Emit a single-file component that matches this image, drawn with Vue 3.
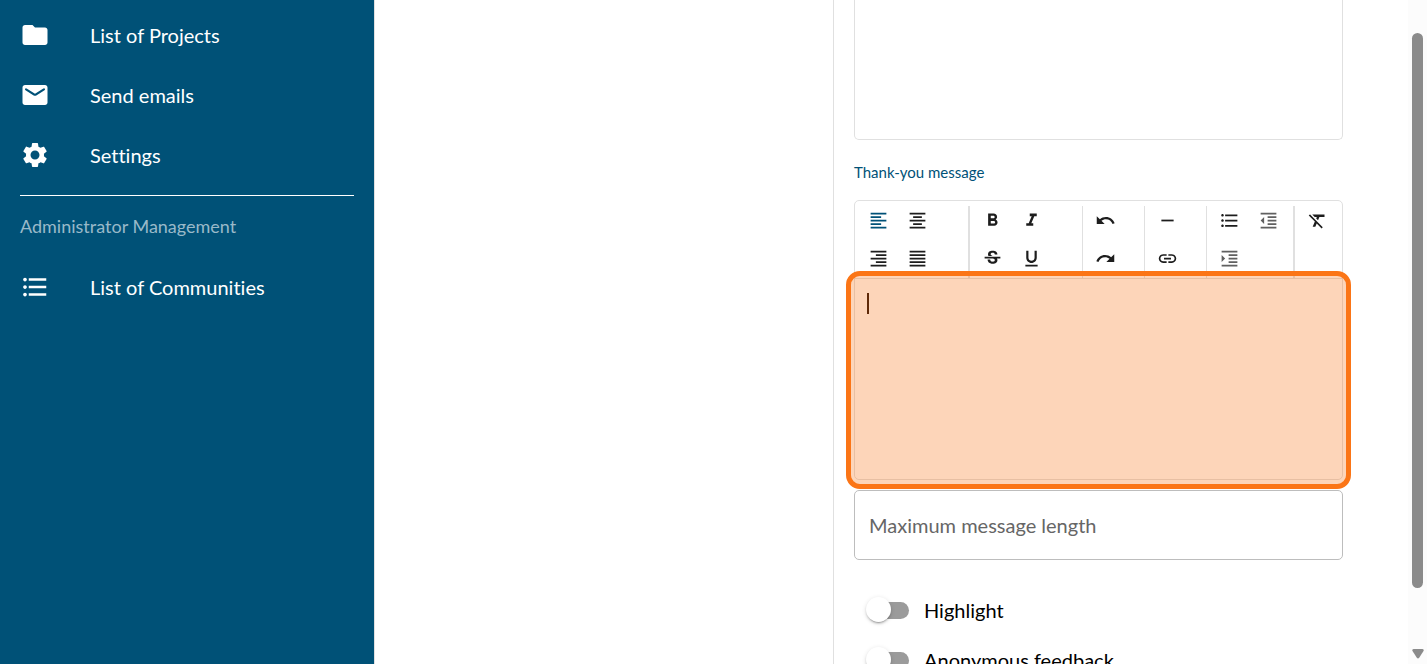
<script setup>
import { ref } from 'vue'

const mainLinks = [
  { label: 'List of Projects', path: 'M10 4H4c-1.1 0-2 .9-2 2v12c0 1.1.9 2 2 2h16c1.1 0 2-.9 2-2V8c0-1.1-.9-2-2-2h-8z' },
  { label: 'Send emails', path: 'M20 4H4c-1.1 0-2 .9-2 2v12c0 1.1.9 2 2 2h16c1.1 0 2-.9 2-2V6c0-1.1-.9-2-2-2zm-.4 4.25-6.54 4.09c-.65.41-1.47.41-2.12 0L4.4 8.25a.85.85 0 1 1 .9-1.44L12 11l6.7-4.19a.85.85 0 1 1 .9 1.44z' },
  { label: 'Settings', path: 'M19.14 12.94c.04-.3.06-.61.06-.94 0-.32-.02-.64-.07-.94l2.03-1.58c.18-.14.23-.41.12-.61l-1.92-3.32c-.12-.22-.37-.29-.59-.22l-2.39.96c-.5-.38-1.03-.7-1.62-.94l-.36-2.54c-.04-.24-.24-.41-.48-.41h-3.84c-.24 0-.43.17-.47.41l-.36 2.54c-.59.24-1.13.57-1.62.94l-2.39-.96c-.22-.08-.47 0-.59.22L2.74 8.87c-.12.21-.08.47.12.61l2.03 1.58c-.05.3-.09.63-.09.94s.02.64.07.94l-2.03 1.58c-.18.14-.23.41-.12.61l1.92 3.32c.12.22.37.29.59.22l2.39-.96c.5.38 1.03.7 1.62.94l.36 2.54c.05.24.24.41.48.41h3.84c.24 0 .44-.17.47-.41l.36-2.54c.59-.24 1.13-.56 1.62-.94l2.39.96c.22.08.47 0 .59-.22l1.92-3.32c.12-.22.07-.47-.12-.61l-2.01-1.58zM12 15.6c-1.98 0-3.6-1.62-3.6-3.6s1.62-3.6 3.6-3.6 3.6 1.62 3.6 3.6-1.62 3.6-3.6 3.6z' },
]

const listPath = 'M4 10.5c-.83 0-1.5.67-1.5 1.5s.67 1.5 1.5 1.5 1.5-.67 1.5-1.5-.67-1.5-1.5-1.5zm0-6c-.83 0-1.5.67-1.5 1.5S3.17 7.5 4 7.5 5.5 6.83 5.5 6 4.83 4.5 4 4.5zm0 12c-.83 0-1.5.68-1.5 1.5s.68 1.5 1.5 1.5 1.5-.68 1.5-1.5-.67-1.5-1.5-1.5zM7 19h14v-2H7v2zm0-6h14v-2H7v2zm0-8v2h14V5H7z'

const groups = [
  [
    { name: 'Align left', active: true, path: 'M15 15H3v2h12v-2zm0-8H3v2h12V7zM3 13h18v-2H3v2zm0 8h18v-2H3v2zM3 3v2h18V3H3z' },
    { name: 'Align center', path: 'M7 15v2h10v-2H7zm-4 6h18v-2H3v2zm0-8h18v-2H3v2zm4-6v2h10V7H7zM3 3v2h18V3H3z' },
    { name: 'Align right', path: 'M3 21h18v-2H3v2zm6-4h12v-2H9v2zm-6-4h18v-2H3v2zm6-4h12V7H9v2zM3 3v2h18V3H3z' },
    { name: 'Justify', path: 'M3 21h18v-2H3v2zm0-4h18v-2H3v2zm0-4h18v-2H3v2zm0-4h18V7H3v2zm0-6v2h18V3H3z' },
  ],
  [
    { name: 'Bold', path: 'M15.6 10.79c.97-.67 1.65-1.77 1.65-2.79 0-2.26-1.75-4-4-4H7v14h7.04c2.09 0 3.71-1.7 3.71-3.79 0-1.52-.86-2.82-2.15-3.42zM10 6.5h3c.83 0 1.5.67 1.5 1.5s-.67 1.5-1.5 1.5h-3v-3zm3.5 9H10v-3h3.5c.83 0 1.5.67 1.5 1.5s-.67 1.5-1.5 1.5z' },
    { name: 'Italic', path: 'M10 4v3h2.21l-3.42 8H6v3h8v-3h-2.21l3.42-8H18V4z' },
    { name: 'Strikethrough', path: 'M7.24 8.75c-.26-.48-.39-1.03-.39-1.67 0-.61.13-1.16.4-1.67.26-.5.63-.93 1.11-1.29.48-.35 1.05-.63 1.7-.83.66-.19 1.39-.29 2.18-.29.81 0 1.54.11 2.21.34.66.22 1.23.54 1.69.94.47.4.83.88 1.08 1.43s.38 1.15.38 1.81h-3.01c0-.31-.05-.59-.15-.85-.09-.27-.24-.49-.44-.68-.2-.19-.45-.33-.75-.44-.3-.1-.66-.16-1.06-.16-.39 0-.74.04-1.03.13s-.53.21-.72.36c-.19.16-.34.34-.44.55-.1.21-.15.43-.15.66 0 .48.25.88.74 1.21.38.25.77.48 1.41.7H7.39c-.05-.08-.11-.17-.15-.25zM21 12v-2H3v2h9.62c.18.07.4.14.55.2.37.17.66.34.87.51s.35.36.43.57c.07.2.11.43.11.69 0 .23-.05.45-.14.66-.09.2-.23.38-.42.53-.19.15-.42.26-.71.35-.29.08-.63.13-1.01.13-.43 0-.83-.04-1.18-.13s-.66-.23-.91-.42c-.25-.19-.45-.44-.59-.75s-.25-.76-.25-1.21H6.4c0 .55.08 1.13.24 1.58s.37.85.65 1.21c.28.35.6.66.98.92.37.26.78.48 1.22.65.44.17.9.3 1.38.39.48.08.96.13 1.44.13.8 0 1.53-.09 2.18-.28s1.21-.45 1.67-.79c.46-.34.82-.77 1.07-1.27s.38-1.07.38-1.71c0-.6-.1-1.14-.31-1.61-.05-.11-.11-.23-.17-.33H21z' },
    { name: 'Underline', path: 'M12 17c3.31 0 6-2.69 6-6V3h-2.5v8c0 1.93-1.57 3.5-3.5 3.5S8.5 12.93 8.5 11V3H6v8c0 3.31 2.69 6 6 6zm-7 2v2h14v-2H5z' },
  ],
  [
    { name: 'Undo', path: 'M12.5 8c-2.65 0-5.05.99-6.9 2.6L2 7v9h9l-3.62-3.62c1.39-1.16 3.16-1.88 5.12-1.88 3.54 0 6.55 2.31 7.6 5.5l2.37-.78C21.08 11.03 17.15 8 12.5 8z' },
    { name: 'Redo', path: 'M18.4 10.6C16.55 8.99 14.15 8 11.5 8c-4.65 0-8.58 3.03-9.96 7.22L3.9 16c1.05-3.19 4.05-5.5 7.6-5.5 1.95 0 3.73.72 5.12 1.88L13 16h9V7l-3.6 3.6z' },
  ],
  [
    { name: 'Horizontal rule', path: 'M5 11h14v2H5z' },
    { name: 'Link', path: 'M3.9 12c0-1.71 1.39-3.1 3.1-3.1h4V7H7c-2.76 0-5 2.24-5 5s2.24 5 5 5h4v-1.9H7c-1.71 0-3.1-1.39-3.1-3.1zM8 13h8v-2H8v2zm9-6h-4v1.9h4c1.71 0 3.1 1.39 3.1 3.1s-1.39 3.1-3.1 3.1h-4V17h4c2.76 0 5-2.24 5-5s-2.24-5-5-5z' },
  ],
  [
    { name: 'Bulleted list', path: listPath },
    { name: 'Decrease indent', disabled: true, path: 'M11 17h10v-2H11v2zm-8-5 4 4V8l-4 4zm0 9h18v-2H3v2zM3 3v2h18V3H3zm8 6h10V7H11v2zm0 4h10v-2H11v2z' },
    { name: 'Increase indent', disabled: true, path: 'M3 21h18v-2H3v2zM3 8v8l4-4-4-4zm8 9h10v-2H11v2zM3 3v2h18V3H3zm8 6h10V7H11v2zm0 4h10v-2H11v2z' },
  ],
  [
    { name: 'Remove formatting', path: 'M3.27 5 2 6.27l6.97 6.97L6.5 19h3l1.57-3.66L16.73 21 18 19.73 3.55 5.27 3.27 5zM6 5v.18L8.82 8h2.4l-.72 1.68 2.1 2.1L14.21 8H20V5H6z' },
  ],
]

const highlight = ref(false)
const anonymous = ref(false)
</script>

<template>
  <div class="layout">
    <nav class="sidebar" aria-label="Administration">
      <a v-for="link in mainLinks" :key="link.label" href="#" class="nav-link">
        <svg class="nav-icon" viewBox="0 0 24 24" aria-hidden="true"><path :d="link.path" /></svg>
        <span>{{ link.label }}</span>
      </a>
      <hr class="divider" />
      <h2 class="nav-heading">Administrator Management</h2>
      <a href="#" class="nav-link">
        <svg class="nav-icon" viewBox="0 0 24 24" aria-hidden="true"><path :d="listPath" /></svg>
        <span>List of Communities</span>
      </a>
    </nav>

    <main class="content">
      <section class="blank"></section>
      <form class="panel" @submit.prevent>
        <textarea class="previous" aria-label="Message"></textarea>
        <label class="field-label" for="thanks">Thank-you message</label>
        <div class="editor">
          <div class="toolbar" role="toolbar" aria-label="Formatting">
            <div v-for="(group, i) in groups" :key="i" class="group">
              <button
                v-for="tool in group"
                :key="tool.name"
                type="button"
                class="tool"
                :class="{ active: tool.active }"
                :disabled="tool.disabled"
                :aria-label="tool.name"
              >
                <svg viewBox="0 0 24 24" aria-hidden="true"><path :d="tool.path" /></svg>
              </button>
            </div>
          </div>
          <div class="edit-area">
            <textarea id="thanks" class="edit-input"></textarea>
            <span class="caret"></span>
            <span class="focus-ring"></span>
          </div>
        </div>
        <input class="length" type="text" placeholder="Maximum message length" aria-label="Maximum message length" />
        <div class="switches">
          <label class="switch-row"><input v-model="highlight" type="checkbox" class="switch" />Highlight</label>
          <label class="switch-row"><input v-model="anonymous" type="checkbox" class="switch" />Anonymous feedback</label>
        </div>
      </form>
    </main>

    <div class="scrollbar" aria-hidden="true">
      <span class="thumb"></span>
      <svg class="arrow" viewBox="0 0 12 10"><path d="M1.5 0h9q1.8.3 1 2L7.2 8.8q-1.2 1.2-2.4 0L.5 2q-.8-1.7 1-2z" /></svg>
    </div>
  </div>
</template>

<style>
body {
  margin: 0;
  overflow: hidden;
}
</style>

<style scoped>
.layout {
  display: flex;
  height: 100vh;
  overflow: hidden;
  background: #fff;
  color: #000;
  font-family: Lato, "Open Sans", sans-serif;
  font-size: 20px;
  font-variant-ligatures: none;
}
.layout * {
  box-sizing: border-box;
}
.sidebar {
  flex: 0 0 375px;
  padding-top: 6px;
  border-right: 1px solid #e0e0e0;
  background: #005177;
}
.nav-link {
  display: flex;
  align-items: center;
  height: 60px;
  padding: 0 20px 2px;
  color: #fff;
  line-height: 30px;
  text-decoration: none;
}
.nav-icon {
  width: 30px;
  height: 30px;
  margin-right: 40px;
  fill: currentColor;
}
.divider {
  height: 1px;
  margin: 9px 20px 0;
  border: 0;
  background: #fff;
}
.nav-heading {
  margin: 0;
  padding: 15px 20px 17px;
  color: #99b9c9;
  font-size: 18px;
  font-weight: 400;
  line-height: 30px;
}
.content {
  display: grid;
  flex: 1;
  grid-template-columns: 458fr 575fr;
  min-width: 0;
}
.panel {
  display: flex;
  flex-direction: column;
  min-width: 0;
  padding: 0 65px 0 20px;
  border-left: 1px solid #e0e0e0;
}
textarea {
  display: block;
  width: 100%;
  margin: 0;
  resize: none;
  outline: 0;
  background: #fff;
  font: inherit;
}
.previous {
  flex: 0 0 140px;
  border: 1px solid #e0e0e0;
  border-top: 0;
  border-radius: 0 0 5px 5px;
}
.field-label {
  margin: 20px 0 15px;
  color: #005177;
  font-size: 15px;
  line-height: 25px;
}
.editor {
  border: 1px solid #e0e0e0;
  border-radius: 5px;
}
.toolbar {
  display: grid;
  grid-template-columns: 113fr 114fr 62fr 62fr 87fr 49fr;
  height: 78px;
  border-bottom: 1px solid #e0e0e0;
}
.group {
  display: flex;
  flex-wrap: wrap;
  align-content: flex-start;
  gap: 1px 2px;
  margin-top: 5px;
  padding-left: 4px;
}
.group:first-child {
  padding-left: 5px;
}
.group + .group {
  border-left: 1px solid #e0e0e0;
}
.group:nth-child(2),
.group:last-child {
  border-left-width: 2px;
}
.tool {
  display: grid;
  place-items: center;
  width: 37px;
  height: 37px;
  margin-top: -4px;
  margin-bottom: 4px;
  padding: 0;
  border: 0;
  background: none;
  color: #1d1d1d;
}
.tool.active {
  color: #005177;
}
.tool:disabled {
  opacity: 0.7;
}
.tool svg {
  width: 21px;
  height: 21px;
  fill: currentColor;
}
.edit-area {
  position: relative;
}
.edit-input {
  height: 200px;
  padding: 12px;
  border: 0;
  border-radius: 0 0 5px 5px;
}
.caret {
  position: absolute;
  top: 14px;
  left: 12px;
  width: 2px;
  height: 21px;
  background: #1d0a00;
}
.focus-ring {
  position: absolute;
  inset: -8px -9px -10px;
  border: 5px solid #fb7516;
  border-radius: 14px;
  background: rgba(249, 115, 22, 0.3);
  background-clip: padding-box;
  pointer-events: none;
}
.length {
  width: 100%;
  height: 70px;
  margin-top: 10px;
  padding: 0 14px;
  border: 1px solid #bdbdbd;
  border-radius: 5px;
  outline: 0;
  background: #fff;
  color: #000;
  font: inherit;
}
.length::placeholder {
  color: #666;
  opacity: 1;
}
.switches {
  padding: 25px 0 0 12px;
}
.switch-row {
  display: flex;
  align-items: center;
  gap: 15px;
  height: 50px;
  line-height: 30px;
}
.switch {
  position: relative;
  width: 43px;
  height: 26px;
  margin: 0;
  appearance: none;
}
.switch::before {
  position: absolute;
  inset: 5px 0 4px 5px;
  border-radius: 9px;
  background: #9b9b9b;
  content: "";
}
.switch::after {
  position: absolute;
  top: 0;
  left: 0;
  width: 25px;
  height: 25px;
  border-radius: 50%;
  background: #fff;
  box-shadow: 0 3px 1px -2px rgba(0, 0, 0, 0.2), 0 2px 2px rgba(0, 0, 0, 0.14), 0 1px 5px rgba(0, 0, 0, 0.12);
  content: "";
}
.switch:checked::after {
  left: 18px;
}
.scrollbar {
  display: flex;
  flex: 0 0 19px;
  flex-direction: column;
  align-items: center;
  justify-content: space-between;
  padding: 33px 0 5px;
  background: #fcfcfc;
}
.thumb {
  width: 11px;
  height: 555px;
  height: calc(100% - 71px);
  border-radius: 6px;
  background: #8b8b8b;
}
.arrow {
  width: 12px;
  height: 10px;
  fill: #8b8b8b;
}
</style>
